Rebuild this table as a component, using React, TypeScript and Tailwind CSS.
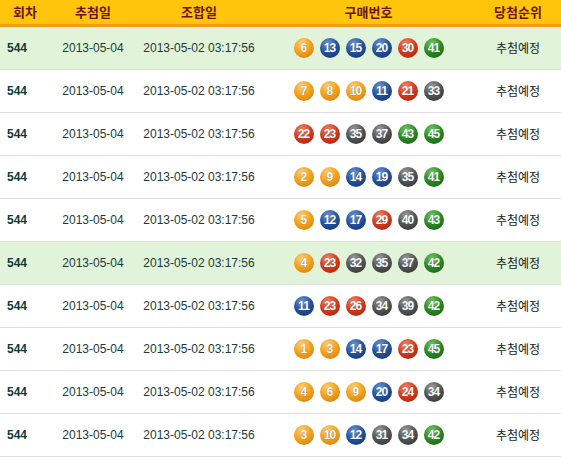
import React from 'react';

type Row = { nums: number[]; hl?: boolean };

const rows: Row[] = [
    { nums: [6, 13, 15, 20, 30, 41], hl: true },
    { nums: [7, 8, 10, 11, 21, 33] },
    { nums: [22, 23, 35, 37, 43, 45] },
    { nums: [2, 9, 14, 19, 35, 41] },
    { nums: [5, 12, 17, 29, 40, 43] },
    { nums: [4, 23, 32, 35, 37, 42], hl: true },
    { nums: [11, 23, 26, 34, 39, 42] },
    { nums: [1, 3, 14, 17, 23, 45] },
    { nums: [4, 6, 9, 20, 24, 34] },
    { nums: [3, 10, 12, 31, 34, 42] },
];

function ballClass(n: number) {
    if (n <= 10) return 'bg-[radial-gradient(circle_at_40%_28%,#ffd27a_0%,#f4a21e_45%,#cf7604_100%)]';
    if (n <= 20) return 'bg-[radial-gradient(circle_at_40%_28%,#6d96d6_0%,#22519c_50%,#112d63_100%)]';
    if (n <= 30) return 'bg-[radial-gradient(circle_at_40%_28%,#f4876a_0%,#d4381b_50%,#97200b_100%)]';
    if (n <= 40) return 'bg-[radial-gradient(circle_at_40%_28%,#a0a0a0_0%,#525252_50%,#2c2c2c_100%)]';
    return 'bg-[radial-gradient(circle_at_40%_28%,#78c964_0%,#2a8821_50%,#13570f_100%)]';
}

function Ball({ n }: { n: number }) {
    return (
        <span
            className={`flex items-center justify-center w-[20px] h-[20px] rounded-full text-white text-[12px] font-bold tracking-[-0.8px] [text-shadow:0_0_1px_rgba(0,0,0,0.5)] ${ballClass(n)}`}
        >
            {n}
        </span>
    );
}

export default function App() {
    return (
        <div className="w-[561px] h-[460px] bg-white overflow-hidden font-['Liberation_Sans','Noto_Sans_CJK_KR',sans-serif]">
            {/* Header */}
            <div className="flex h-[27px] bg-[#ffc50d] border-b-[3px] border-[#f39c12] text-[#6b1500] text-[13px] font-bold font-['Noto_Sans_CJK_KR',sans-serif]">
                <div className="w-[50px] flex items-center justify-center">회차</div>
                <div className="w-[86px] flex items-center justify-center">추첨일</div>
                <div className="w-[126px] flex items-center justify-center">조합일</div>
                <div className="w-[213px] flex items-center justify-center">구매번호</div>
                <div className="w-[86px] flex items-center justify-center">당첨순위</div>
            </div>

            {/* Rows */}
            {rows.map((r, i) => (
                <div
                    key={i}
                    className={`flex h-[43px] border-b border-[#dddddd] text-[12px] text-[#1c3a38] ${r.hl ? 'bg-[#e1f4da]' : 'bg-white'}`}
                >
                    <div className="w-[50px] flex items-center pl-[7px] font-bold text-[#0e3a3a]">544</div>
                    <div className="w-[86px] flex items-center justify-center">2013-05-04</div>
                    <div className="w-[126px] flex items-center justify-center">2013-05-02 03:17:56</div>
                    <div className="w-[213px] flex items-center justify-center gap-[6px]">
                        {r.nums.map((n) => (
                            <Ball key={n} n={n} />
                        ))}
                    </div>
                    <div className="w-[86px] flex items-center justify-center font-['Noto_Sans_CJK_KR',sans-serif] text-[#222]">추첨예정</div>
                </div>
            ))}
        </div>
    );
}
